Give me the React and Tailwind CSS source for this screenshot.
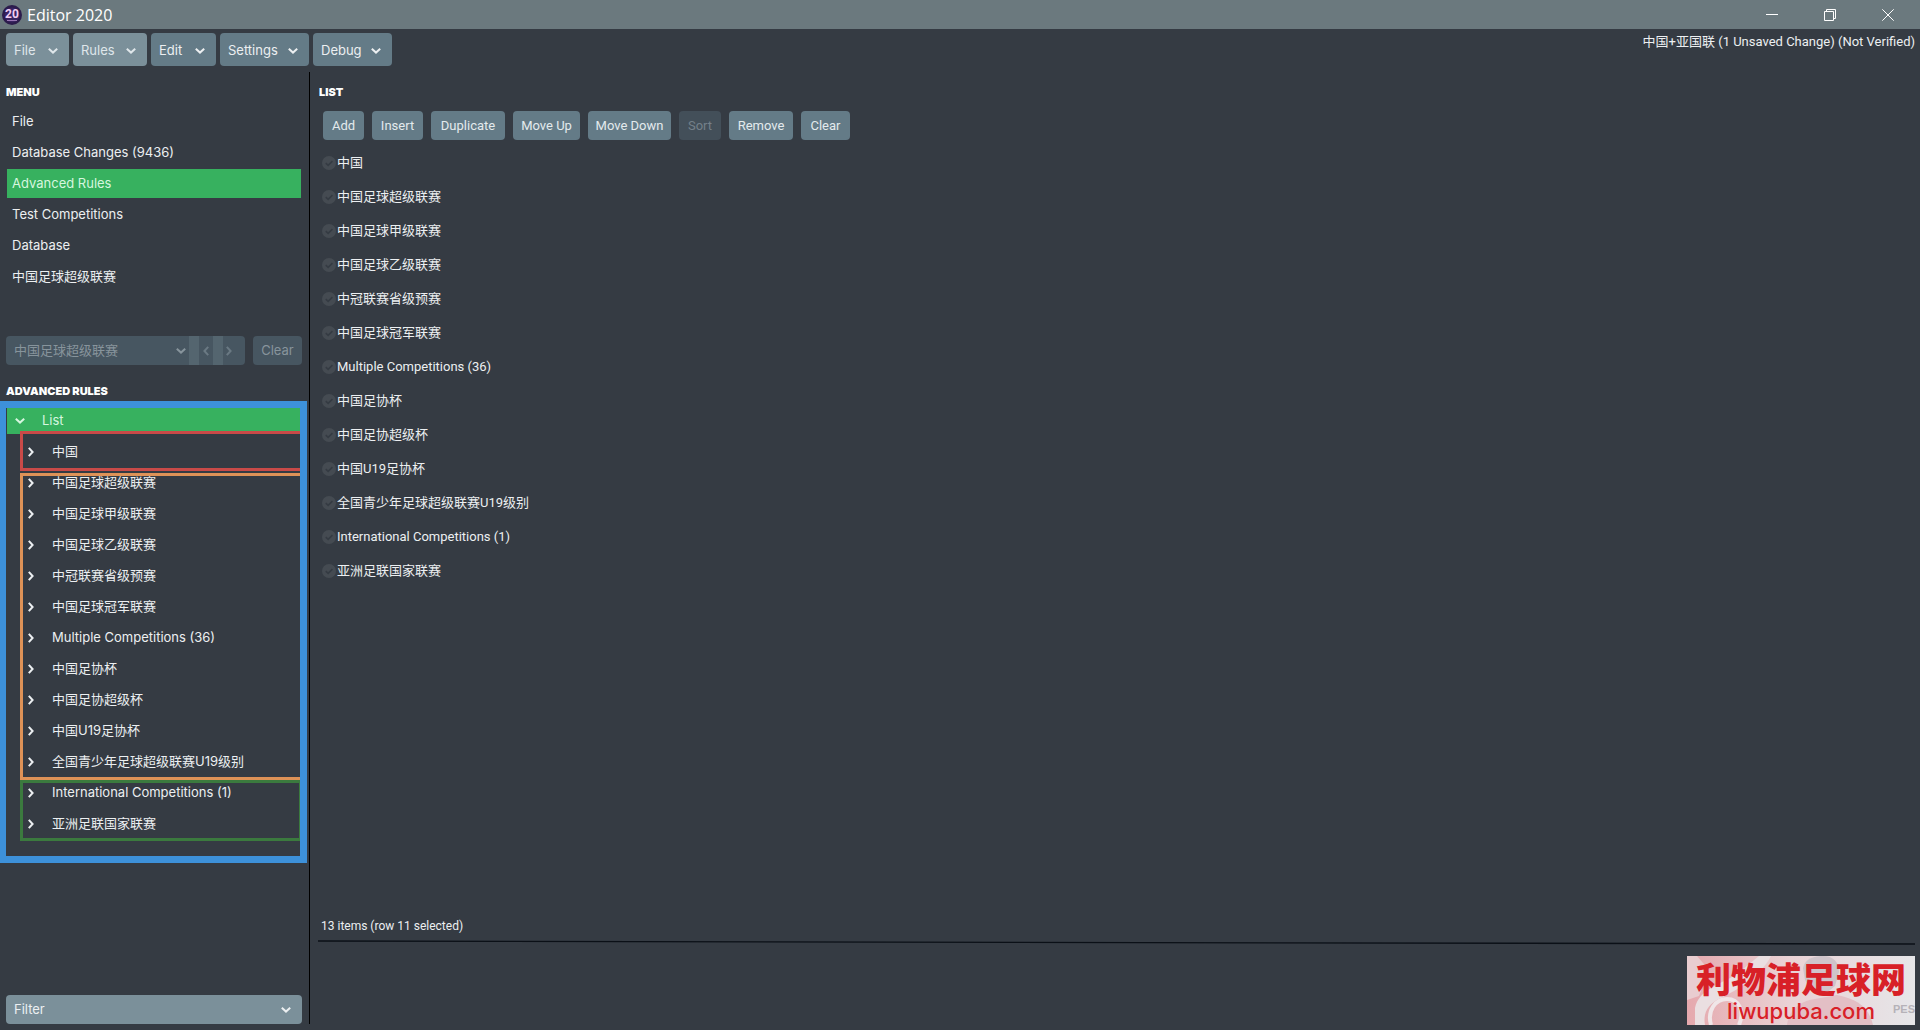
import React from "react";

const menuItems = ["File", "Database Changes (9436)", "Advanced Rules", "Test Competitions", "Database", "中国足球超级联赛"];

const leagues = [
  "中国足球超级联赛",
  "中国足球甲级联赛",
  "中国足球乙级联赛",
  "中冠联赛省级预赛",
  "中国足球冠军联赛",
  "Multiple Competitions (36)",
  "中国足协杯",
  "中国足协超级杯",
  "中国U19足协杯",
  "全国青少年足球超级联赛U19级别",
];
const nations = ["中国"];
const international = ["International Competitions (1)", "亚洲足联国家联赛"];
const allItems = [...nations, ...leagues, ...international];

const toolbar = [
  { label: "File", lit: true, width: "w-[63px]" },
  { label: "Rules", lit: true, width: "w-[74px]" },
  { label: "Edit", lit: false, width: "w-[65px]" },
  { label: "Settings", lit: false, width: "w-[89px]" },
  { label: "Debug", lit: false, width: "w-[79px]" },
];

const actions = [
  { label: "Add", width: "w-[41px]" },
  { label: "Insert", width: "w-[51px]" },
  { label: "Duplicate", width: "w-[74px]" },
  { label: "Move Up", width: "w-[67px]" },
  { label: "Move Down", width: "w-[83px]" },
  { label: "Sort", width: "w-[42px]" },
  { label: "Remove", width: "w-[64px]" },
  { label: "Clear", width: "w-[49px]" },
];

const wide = "font-['Inter','Noto_Sans_CJK_SC',sans-serif]";

function ChevronDown({ className = "" }) {
  return (
    <svg className={`h-[6px] w-[10px] shrink-0 ${className}`} viewBox="0 0 10 6" fill="none" stroke="currentColor" strokeWidth="2" aria-hidden="true">
      <path d="M0.8 0.8 L5 4.6 L9.2 0.8" />
    </svg>
  );
}

function ChevronRight({ className = "" }) {
  return (
    <svg className={`h-[10px] w-[6px] shrink-0 ${className}`} viewBox="0 0 6 10" fill="none" stroke="currentColor" strokeWidth="2" aria-hidden="true">
      <path d="M0.8 0.8 L4.6 5 L0.8 9.2" />
    </svg>
  );
}

function TitleBar() {
  return (
    <header className="flex h-[29px] shrink-0 items-center bg-[#6b797e] text-white">
      <svg className="ml-[2px] h-5 w-5" viewBox="0 0 20 20" aria-hidden="true">
        <circle cx="10" cy="10" r="10" fill="#2c1c4c" />
        <circle cx="10" cy="10" r="7.5" fill="#3a2462" />
        <text x="10" y="13" textAnchor="middle" fontSize="12" fontWeight="700" fontFamily="Roboto, sans-serif" fill="#f0cdf2">20</text>
        <path d="M5 15.5h10" stroke="#9a76b4" strokeWidth="1" />
      </svg>
      <h1 className="ml-[5px] flex-1 font-['Open_Sans',sans-serif] text-[16px]">Editor 2020</h1>
      <button aria-label="Minimize" className="flex h-full w-[58px] items-center justify-center">
        <svg className="h-3 w-3" viewBox="0 0 12 12" stroke="currentColor"><path d="M0 5.5h12" /></svg>
      </button>
      <button aria-label="Restore" className="flex h-full w-[58px] items-center justify-center">
        <svg className="h-3 w-3" viewBox="0 0 12 12" fill="none" stroke="currentColor"><path d="M0.5 2.5h9v9h-9zM2.5 2.5v-2h9v9h-2" /></svg>
      </button>
      <button aria-label="Close" className="mr-[3px] flex h-full w-[58px] items-center justify-center">
        <svg className="h-3 w-3" viewBox="0 0 12 12" stroke="currentColor"><path d="M0.3 0.3l11.4 11.4M11.7 0.3L0.3 11.7" /></svg>
      </button>
    </header>
  );
}

function TreeGroup({ items, frame }) {
  return (
    <div className="relative">
      <ul>
        {items.map((t) => (
          <li key={t}>
            <button className="flex h-[31px] w-full items-center pl-[22px] text-left">
              <ChevronRight />
              <span className="ml-[18px]">{t}</span>
            </button>
          </li>
        ))}
      </ul>
      <div className={`pointer-events-none absolute right-0 left-[14px] ${frame}`} />
    </div>
  );
}

function Sidebar() {
  return (
    <aside className={`mb-[6px] flex w-[310px] shrink-0 flex-col border-r border-black text-[13px] ${wide}`}>
      <h2 className="mt-2 ml-[6px] h-[26px] text-[11px] leading-6 font-black text-white">MENU</h2>
      <nav className="flex flex-col pr-2 pl-[7px]">
        {menuItems.map((t) => (
          <button
            key={t}
            className={`my-[1px] flex h-[29px] w-full items-center pl-[5px] text-left ${t === "Advanced Rules" ? "bg-[#37b15f] text-[#d6f6df]" : ""}`}
          >
            {t}
          </button>
        ))}
      </nav>

      <div className="mt-11 flex h-[29px] gap-2 pr-[7px] pl-[6px] text-[#87949c]">
        <div className="flex flex-1 overflow-hidden rounded-[4px] bg-[#475661]">
          <button disabled className="flex flex-1 items-center justify-between pr-[3px] pl-2">
            中国足球超级联赛
            <ChevronDown />
          </button>
          <span className="w-[10px] bg-[#54656f]" />
          <button disabled aria-label="Previous" className="flex w-[14px] items-center justify-center text-[#6a7983]">
            <ChevronRight className="rotate-180" />
          </button>
          <span className="w-[10px] bg-[#54656f]" />
          <button disabled aria-label="Next" className="flex w-[22px] items-center pl-[3px] text-[#6a7983]">
            <ChevronRight />
          </button>
        </div>
        <button disabled className="w-[49px] rounded-[4px] bg-[#475661]">Clear</button>
      </div>

      <h2 className="mt-4 ml-[6px] text-[11px] leading-5 font-black text-white">ADVANCED RULES</h2>
      <section aria-label="Rules tree" className="mr-[2px] h-[462px] border-y-[7px] border-r-[7px] border-l-[6px] border-[#3d91da]">
        <button className="mb-[2px] ml-px flex h-[26px] w-[calc(100%-1px)] items-center bg-[#37b15f] pl-2 text-left text-[#d6f6df]">
          <ChevronDown />
          <span className="ml-[17px]">List</span>
        </button>
        <TreeGroup items={nations} frame="border-y-[3px] border-l-[3px] border-[#c94a48] -top-[5px] -bottom-[4px]" />
        <TreeGroup items={leagues} frame="border-y-[3px] border-l-[3px] border-[#de9257] top-[6px] -bottom-[3px]" />
        <TreeGroup items={international} frame="border-y-[3px] border-l-[3px] border-r border-[#3b7a3e] top-[3px] -bottom-[2px]" />
      </section>

      <button className="mt-auto mr-[7px] ml-[6px] flex h-[29px] items-center justify-between rounded-[4px] bg-[#7b909a] pr-[11px] pl-2">
        Filter
        <ChevronDown />
      </button>
    </aside>
  );
}

function Watermark() {
  return (
    <div className="relative mt-[11px] mr-[5px] flex h-[69px] w-[228px] flex-col items-center self-end bg-[#e8dfe1] text-[#d82027]">
      <svg className="absolute inset-0 h-full w-full" viewBox="0 0 228 69" preserveAspectRatio="none" aria-hidden="true">
        <defs>
          <linearGradient id="wm" x1="0" x2="1">
            <stop offset="0" stopColor="#e5a8ad" />
            <stop offset="0.45" stopColor="#ead2d5" />
            <stop offset="1" stopColor="#e6e6e9" />
          </linearGradient>
        </defs>
        <path d="M0 0h228v69H0z" fill="url(#wm)" />
        <path d="M0 0h10L22 14 12 40 0 44z" fill="#e9cdd0" />
        <path d="M8 52C12 34 30 30 50 18L72 0h12C74 20 50 34 34 42 20 48 16 58 18 69H8z" fill="#eadfe1" />
        <path d="M24 69c-4-14 4-26 16-26s18 12 12 26" fill="none" stroke="#f0e6e8" strokeWidth="4" />
        <path d="M116 12c2-10 12-12 20-12 10 0 16 6 16 16l-4 14-10 8-12-2-8-12z" fill="#cfc4ca" />
        <path d="M100 69c2-16 14-24 28-26l22-4c20 4 32 12 36 30z" fill="#e3bfc5" />
      </svg>
      <span className="absolute right-0 bottom-2 font-['Liberation_Sans',sans-serif] text-[11px] leading-4 font-bold text-[#b5b2b8]">PES</span>
      <span className="relative mt-[3px] font-['Noto_Sans_CJK_SC',sans-serif] text-[35px] leading-[38px] font-black whitespace-nowrap">利物浦足球网</span>
      <span className="relative mt-1 font-['Inter',sans-serif] text-[22px] leading-[20px] font-medium">liwupuba.com</span>
    </div>
  );
}

function Content() {
  return (
    <main className="flex min-w-0 flex-1 flex-col">
      <h2 className={`mt-2 ml-[9px] text-[11px] leading-6 font-black text-white ${wide}`}>LIST</h2>
      <div className="mt-[7px] ml-[13px] flex gap-2">
        {actions.map((a) => (
          <button
            key={a.label}
            disabled={a.label === "Sort"}
            className={`h-[29px] rounded-[4px] bg-[#647b87] text-[13px] whitespace-nowrap text-[#e3eaed] disabled:bg-[#434f59] disabled:text-[#74808a] ${a.width}`}
          >
            {a.label}
          </button>
        ))}
      </div>
      <ul className="mt-[6px] ml-3">
        {allItems.map((t) => (
          <li key={t} className="flex h-[34px] items-center gap-px">
            <svg className="h-[14px] w-[14px]" viewBox="0 0 13 13" aria-hidden="true">
              <circle cx="6.5" cy="6.5" r="6.5" fill="#454b52" />
              <path d="M3.5 6.6l2.2 2.1 4-4" fill="none" stroke="#353b43" strokeWidth="1.5" />
            </svg>
            {t}
          </li>
        ))}
      </ul>
      <p className="mt-auto ml-[11px] text-[12px] leading-5">13 items (row 11 selected)</p>
      <svg className="mt-1 mr-[5px] ml-2 h-[5px] shrink-0" viewBox="0 0 100 5" preserveAspectRatio="none" aria-hidden="true">
        <path d="M0 1 L100 4" stroke="#0b1017" strokeWidth="1.3" vectorEffect="non-scaling-stroke" />
      </svg>
      <div className="flex h-[85px] shrink-0 flex-col">
        <Watermark />
      </div>
    </main>
  );
}

export default function App() {
  return (
    <div className="flex h-screen min-h-[900px] flex-col bg-[#353b43] font-['Roboto','Noto_Sans_CJK_SC',sans-serif] text-[13px] text-[#eceff1]">
      <TitleBar />
      <div className="flex h-[43px] shrink-0 items-start gap-1 pt-1 pr-[5px] pl-[6px]">
        {toolbar.map((b) => (
          <button
            key={b.label}
            className={`flex h-[33px] items-center justify-between rounded-[4px] pt-[2px] pr-[11px] pl-2 text-[13px] ${wide} ${b.width} ${b.lit ? "bg-[#7b909a] text-[#dfe6ea]" : "bg-[#647b87]"}`}
          >
            {b.label}
            <ChevronDown />
          </button>
        ))}
        <p className="ml-auto leading-[18px]">中国+亚国联 (1 Unsaved Change) (Not Verified)</p>
      </div>
      <div className="flex min-h-0 flex-1">
        <Sidebar />
        <Content />
      </div>
    </div>
  );
}
